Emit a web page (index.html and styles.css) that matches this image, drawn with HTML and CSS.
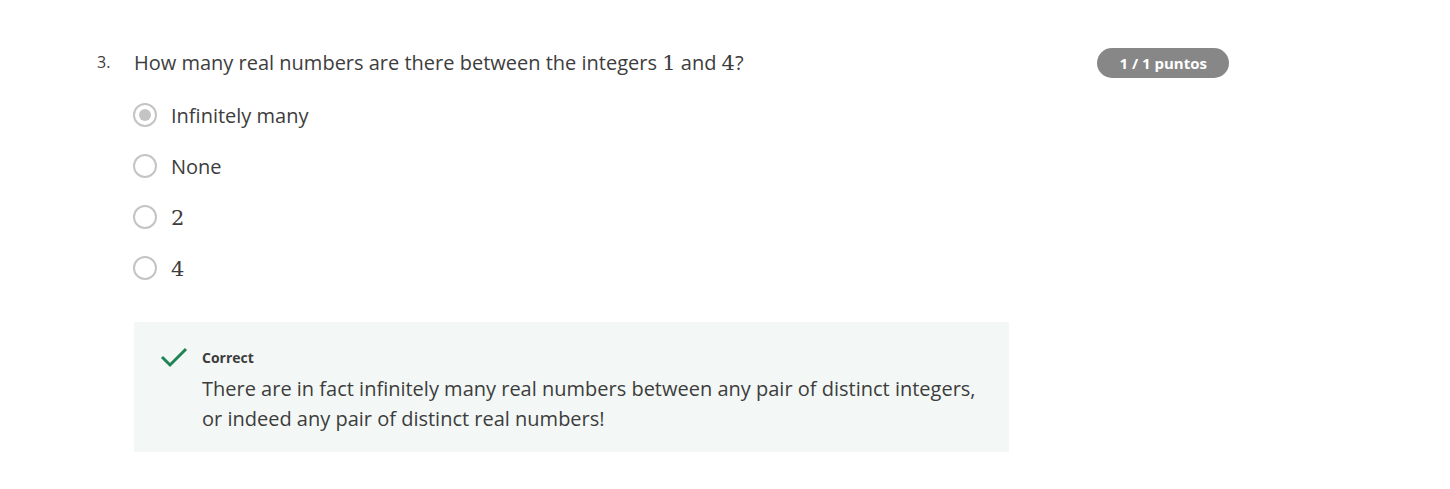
FILE: index.html
```html
<!DOCTYPE html>
<html>
<head>
<meta charset="utf-8">
<link rel="stylesheet" href="styles.css">
</head>
<body>
<div class="page">
  <div class="question">
    <div class="qnum">3.</div>
    <div class="qbody">
      <div class="qhead">
        <div class="qtext">How many real numbers are there between the integers <span class="math">1</span> and <span class="math">4</span>?</div>
        <div class="badge">1 / 1 puntos</div>
      </div>
      <div class="options">
        <div class="option"><span class="radio checked"></span><span class="label">Infinitely many</span></div>
        <div class="option"><span class="radio"></span><span class="label">None</span></div>
        <div class="option"><span class="radio"></span><span class="label"><span class="math">2</span></span></div>
        <div class="option"><span class="radio"></span><span class="label"><span class="math">4</span></span></div>
      </div>
      <div class="feedback">
        <svg class="check" width="28" height="22" viewBox="0 0 28 22"><path d="M2 11 L10 19 L26 3" fill="none" stroke="#1f8354" stroke-width="3"/></svg>
        <div class="fbody">
          <div class="ftitle">Correct</div>
          <div class="ftext">There are in fact infinitely many real numbers between any pair of distinct integers, or indeed any pair of distinct real numbers!</div>
        </div>
      </div>
    </div>
  </div>
</div>
</body>
</html>
```
FILE: styles.css
```css
html, body { margin: 0; padding: 0; background: #fff; }
body { font-family: "Open Sans", "Liberation Sans", sans-serif; color: #3d3d3d; }
.page { padding: 49px 0 0 97px; }
.question { display: flex; }
.qnum { width: 37px; font-size: 16px; line-height: 26px; color: #3d3d3d; }
.qbody { display: flex; flex-direction: column; }
.qhead { display: flex; justify-content: space-between; align-items: flex-start; width: 1095px; }
.qtext { font-size: 20px; line-height: 28px; color: #3d3d3d; }
.math { font-family: "DejaVu Serif", "Liberation Serif", "Times New Roman", serif; font-size: 21px; font-weight: 400; }
.badge { background: #878787; color: #fff; font-weight: 700; font-size: 15px; height: 30px; line-height: 30px; padding: 0 22px; border-radius: 15px; margin-top: -1px; }
.options { display: flex; flex-direction: column; gap: 23px; margin-top: 23px; }
.option { display: flex; align-items: center; height: 28px; }
.radio { width: 20px; height: 20px; border: 2px solid #c4c4c4; border-radius: 50%; box-sizing: content-box; margin-left: -1px; margin-right: 14px; position: relative; background: #fff; }
.radio.checked::after { content: ""; position: absolute; left: 4px; top: 4px; width: 12px; height: 12px; border-radius: 50%; background: #c4c4c4; }
.label { font-size: 20px; color: #3d3d3d; }
.feedback { margin-top: 40px; width: 875px; height: 130px; box-sizing: border-box; background: #f3f8f6; display: flex; padding: 24px 0 0 26px; }
.check { margin-right: 14px; margin-top: 0; }
.ftitle { font-size: 14px; font-weight: 700; color: #3d3d3d; line-height: 24px; }
.ftext { font-size: 20px; line-height: 30px; color: #3d3d3d; margin-top: 4px; max-width: 790px; }
```
